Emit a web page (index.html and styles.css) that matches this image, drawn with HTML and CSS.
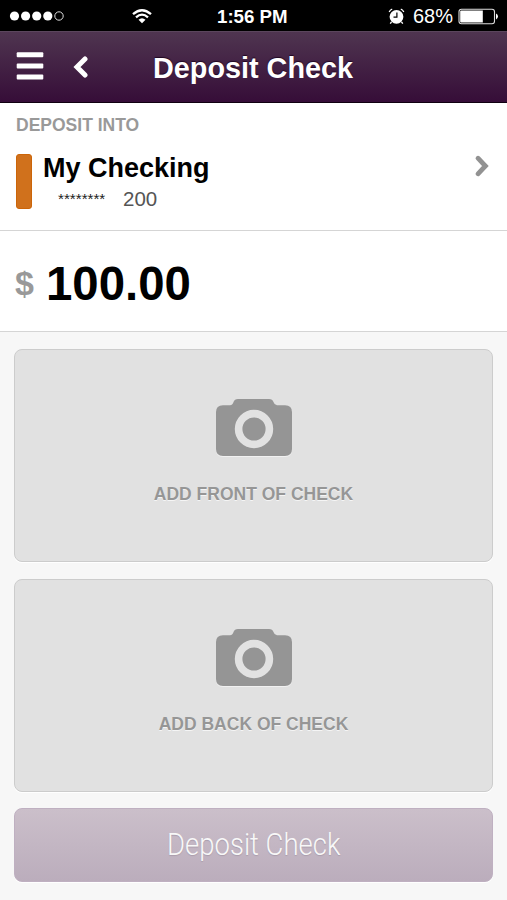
FILE: index.html
```
<!DOCTYPE html>
<html lang="en">
<head>
<meta charset="utf-8">
<title>Deposit Check</title>
<link rel="stylesheet" href="styles.css">
</head>
<body>
<div class="status">
  <div class="status-left">
    <svg class="signal" width="56" height="12" viewBox="0 0 56 12"><g fill="#fff"><circle cx="5.5" cy="6" r="4.6"/><circle cx="16.6" cy="6" r="4.6"/><circle cx="27.7" cy="6" r="4.6"/><circle cx="38.8" cy="6" r="4.6"/></g><circle cx="50" cy="6" r="4.2" fill="none" stroke="#ddd" stroke-width="1"/></svg>
    <svg class="wifi" width="20" height="16" viewBox="0 0 20 16"><g fill="none" stroke="#fff" stroke-width="2.3"><path d="M1 6.2Q10-1.8 19 6.2"/><path d="M4 9.3Q10 4 16 9.3"/></g><path d="M6.5 11.7Q10 8.7 13.5 11.7L10 15.2Z" fill="#fff"/></svg>
  </div>
  <div class="time">1:56 PM</div>
  <div class="status-right">
    <svg width="17" height="17" viewBox="0 0 17 17"><circle cx="8.5" cy="8.8" r="6.9" fill="#fff"/><path d="M1.2 4Q2.2 1.8 4.2 1.2M12.8 1.2Q14.8 1.8 15.8 4M3.5 14L2.2 15.6M13.5 14L14.8 15.6" fill="none" stroke="#fff" stroke-width="1.3"/><path d="M8.9 4.4V9.2H5.5" fill="none" stroke="#000" stroke-width="1.2"/></svg>
    <span class="percent">68%</span>
    <svg width="41" height="17" viewBox="0 0 41 17"><rect x="1" y="1.2" width="35.5" height="14.5" rx="2.5" fill="none" stroke="#ddd" stroke-width="1.1"/><path d="M3.2 2.5H24.8V14.5H3.2Q2.2 14.5 2.2 13.5V3.5Q2.2 2.5 3.2 2.5Z" fill="#fff"/><path d="M38 5.6Q40 6.8 40 8.5T38 11.4Z" fill="#fff"/></svg>
  </div>
</div>
<header class="header">
  <svg class="menu" width="28" height="30" viewBox="0 0 28 30"><g fill="#fff"><rect x=".7" y="1.3" width="26.6" height="5" rx="1"/><rect x=".7" y="12.4" width="26.6" height="5" rx="1"/><rect x=".7" y="23.6" width="26.6" height="5" rx="1"/></g></svg>
  <svg class="back" width="16" height="22" viewBox="0 0 16 22"><path d="M12 3L4 11L12 19" fill="none" stroke="#fff" stroke-width="5" stroke-linecap="round"/></svg>
  <h1>Deposit Check</h1>
</header>
<section class="account">
  <div class="label">DEPOSIT INTO</div>
  <div class="account-row">
    <div class="swatch"></div>
    <div class="account-text">
      <div class="name">My Checking</div>
      <div class="number"><span class="mask">********</span><span>200</span></div>
    </div>
    <svg class="chevron" width="16" height="24" viewBox="0 0 16 24"><path d="M4 4.2L11.4 12L4 19.8" fill="none" stroke="#929292" stroke-width="4.8" stroke-linecap="round"/></svg>
  </div>
</section>
<section class="amount"><span class="currency">$</span><span class="value">100.00</span></section>
<main>
  <div class="photo">
    <svg width="78" height="60" viewBox="0 0 78 60"><path d="M8 7.3H15Q17.8 7 18.5 4Q19.5 1 23 1H54Q57.5 1 58.5 4Q59.3 7 62 7.3H70Q77 7.6 77 14V51Q77 58 70 58H8Q1 58 1 51V14Q1 7.6 8 7.3Z" fill="#f1f1f1" transform="translate(0 1)"/><path d="M8 7.3H15Q17.8 7 18.5 4Q19.5 1 23 1H54Q57.5 1 58.5 4Q59.3 7 62 7.3H70Q77 7.6 77 14V51Q77 58 70 58H8Q1 58 1 51V14Q1 7.6 8 7.3Z" fill="#959595"/><circle cx="39" cy="31" r="15.4" fill="none" stroke="#e2e2e2" stroke-width="7.6"/></svg>
    <div class="caption">ADD FRONT OF CHECK</div>
  </div>
  <div class="photo">
    <svg width="78" height="60" viewBox="0 0 78 60"><path d="M8 7.3H15Q17.8 7 18.5 4Q19.5 1 23 1H54Q57.5 1 58.5 4Q59.3 7 62 7.3H70Q77 7.6 77 14V51Q77 58 70 58H8Q1 58 1 51V14Q1 7.6 8 7.3Z" fill="#f1f1f1" transform="translate(0 1)"/><path d="M8 7.3H15Q17.8 7 18.5 4Q19.5 1 23 1H54Q57.5 1 58.5 4Q59.3 7 62 7.3H70Q77 7.6 77 14V51Q77 58 70 58H8Q1 58 1 51V14Q1 7.6 8 7.3Z" fill="#959595"/><circle cx="39" cy="31" r="15.4" fill="none" stroke="#e2e2e2" stroke-width="7.6"/></svg>
    <div class="caption">ADD BACK OF CHECK</div>
  </div>
  <button class="submit"><span>Deposit Check</span></button>
</main>
</body>
</html>
```
FILE: styles.css
```
* { box-sizing: border-box; }
body {
  margin: 0;
  height: 900px;
  overflow: hidden;
  background: #f7f7f7;
  font-family: "Liberation Sans", Arial, sans-serif;
}
svg { display: block; flex: none; }
.status {
  height: 31px;
  background: #000;
  color: #fff;
  display: grid;
  grid-template-columns: 217px 1fr 119px;
  align-items: center;
}
.status-left { display: flex; align-items: center; padding-left: 9px; }
.wifi { margin-left: 67px; }
.time { font-size: 18.7px; font-weight: bold; white-space: nowrap; padding-top: 2px; }
.status-right { display: flex; align-items: center; padding-top: 1px; }
.percent { font-size: 20px; margin: 0 5px 0 8px; }
.header {
  height: 72px;
  display: flex;
  align-items: center;
  padding-left: 16px;
  background: linear-gradient(#4f3550, #360d38);
  border-top: 1px solid #5b465d;
  border-bottom: 1px solid #100011;
}
.menu { margin-top: -2px; }
.back { margin-left: 29px; }
.header h1 {
  margin: 2px 0 0 64px;
  color: #fff;
  font-size: 28.8px;
  line-height: 34px;
  text-shadow: 0 -1px 1px #200722;
  white-space: nowrap;
}
.account {
  height: 128px;
  padding: 12px 16px 0;
  background: #fff;
  border-bottom: 1px solid #d5d5d5;
}
.label { color: #999; font-size: 17.5px; line-height: 20px; font-weight: bold; }
.account-row { display: flex; margin-top: 19px; }
.swatch { width: 16px; height: 55px; border-radius: 3px; background: #d0711c; border: 1px solid #cc6508; }
.account-text { flex: 1; padding-left: 11px; }
.name { font-size: 27px; line-height: 28px; font-weight: bold; }
.number { display: flex; color: #555; font-size: 20.5px; line-height: 34px; padding-left: 15px; }
.mask { color: #222; font-size: 15.2px; width: 65px; }
.chevron { margin-right: 1px; }
.amount {
  height: 101px;
  background: #fff;
  border-bottom: 1px solid #d5d5d5;
  display: flex;
  align-items: center;
  padding: 4px 0 0 15px;
  font-weight: bold;
}
.currency { color: #999; font-size: 34px; width: 31px; }
.value { font-size: 47.4px; }
main { padding: 17px 14px 0; display: grid; gap: 16.5px; }
.photo {
  height: 213px;
  display: flex;
  flex-direction: column;
  align-items: center;
  padding-top: 48px;
  background: #e1e1e1;
  border: 1px solid #ccc;
  border-radius: 8px;
  box-shadow: 0 1px 0 #fff;
}
.caption { margin-top: 26px; font-size: 17.5px; line-height: 20px; font-weight: bold; color: #969696; text-shadow: 0 1px 0 #f5f5f5; }
.submit {
  height: 74px;
  padding: 0;
  border: 1px solid #bfb0c1;
  border-radius: 8px;
  background: linear-gradient(#cbbfca, #bbadbc);
  box-shadow: 0 1px 0 #fff;
  color: #f8f8f8;
  font: 300 31px/36px Roboto, sans-serif;
  text-shadow: 0 1px 1px #aa9dac;
}
.submit span { display: inline-block; transform: scaleX(.887); }
```
